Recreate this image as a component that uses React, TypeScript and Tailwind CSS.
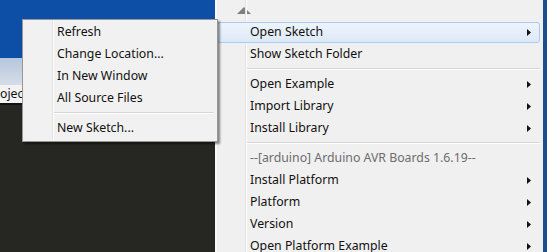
import React from "react";

const Arrow = () => (
  <svg width="4" height="7" viewBox="0 0 4 7" className="shrink-0">
    <path d="M0 0 L4 3.5 L0 7 Z" fill="#111" />
  </svg>
);

type Item = { label: string; sub?: boolean; hl?: boolean; muted?: boolean } | "sep";

const rightItems: Item[] = [
  { label: "Open Sketch", sub: true, hl: true },
  { label: "Show Sketch Folder" },
  "sep",
  { label: "Open Example", sub: true },
  { label: "Import Library", sub: true },
  { label: "Install Library", sub: true },
  "sep",
  { label: "--[arduino] Arduino AVR Boards 1.6.19--", muted: true },
  { label: "Install Platform", sub: true },
  { label: "Platform", sub: true },
  { label: "Version", sub: true },
  { label: "Open Platform Example", sub: true },
];

const popupItems: Item[] = [
  { label: "Refresh" },
  { label: "Change Location..." },
  { label: "In New Window" },
  { label: "All Source Files" },
  "sep",
  { label: "New Sketch..." },
];

export default function App() {
  return (
    <div
      className="relative w-[547px] h-[252px] overflow-hidden flex text-[12.3px] text-[#111]"
      style={{ fontFamily: '"Noto Sans", "Liberation Sans", sans-serif' }}
    >
      {/* left background */}
      <div className="w-[215px] h-full flex flex-col shrink-0">
        <div className="h-[58px] shrink-0 bg-[#0d4fa6]" />
        <div className="h-[27px] shrink-0 bg-gradient-to-b from-[#b5c6dc] to-[#d6dde7]" />
        <div className="h-[18px] shrink-0 bg-[#f3f3f3] flex items-center leading-none text-[#111]">
          <span>oject</span>
        </div>
        <div className="h-[2px] shrink-0 bg-[#111]" />
        <div className="flex-1 bg-[#262622]" />
      </div>

      {/* right menu */}
      <div className="flex-1 h-full flex">
        <div className="w-[2px] bg-[#f9f9f9]" />
        <div className="relative flex-1 bg-[#f0f0f0] flex flex-col">
          <div className="absolute left-[28px] top-0 bottom-0 w-[1px] bg-[#e2e3e3]" />
          <div className="absolute left-[29px] top-0 bottom-0 w-[1px] bg-[#fdfdfd]" />
          <div className="h-[21px] shrink-0 flex items-center pl-[20px]">
            <svg width="14" height="7" viewBox="0 0 14 7" className="block shrink-0 w-[14px] h-[7px]">
              <path d="M0 7 L7 0 L14 7 Z" fill="#7e7e7e" />
            </svg>
          </div>
          {rightItems.map((it, i) =>
            it === "sep" ? (
              <div key={i} className="h-[8px] shrink-0 flex flex-col justify-center pl-[30px] pr-[3px]">
                <div className="h-[1px] bg-[#d7d7d7]" />
                <div className="h-[1px] bg-[#ffffff]" />
              </div>
            ) : (
              <div key={i} className="relative h-[22px] shrink-0 flex items-center">
                {it.hl && (
                  <div className="absolute left-0 right-[3px] top-[1px] bottom-0 rounded-[3px] border border-[#a8c9f0] bg-gradient-to-b from-[#eef4fc] to-[#dde9f8]" />
                )}
                <span
                  className={
                    "relative pl-[33px] flex-1 whitespace-nowrap " +
                    (it.muted ? "text-[#6d6d6d]" : "")
                  }
                >
                  {it.label}
                </span>
                {it.sub && (
                  <span className="relative pr-[12px] flex items-center">
                    <Arrow />
                  </span>
                )}
              </div>
            )
          )}
        </div>
        <div className="w-[4px] bg-[#1a4f8f]" />
      </div>

      {/* popup */}
      <div className="absolute left-[22px] top-[19px] w-[196px] h-[123px] bg-[#f1f1f1] border border-[#979797] shadow-[2px_2px_2px_rgba(0,0,0,0.45)]">
        <div className="absolute left-[29px] top-0 bottom-0 w-[1px] bg-[#e2e3e3]" />
        <div className="absolute left-[30px] top-0 bottom-0 w-[1px] bg-[#fdfdfd]" />
        <div className="relative pt-[1px] flex flex-col">
          {popupItems.map((it, i) =>
            it === "sep" ? (
              <div key={i} className="h-[8px] shrink-0 flex flex-col justify-center pl-[31px] pr-[3px]">
                <div className="h-[1px] bg-[#d7d7d7]" />
                <div className="h-[1px] bg-[#ffffff]" />
              </div>
            ) : (
              <div key={i} className="h-[22px] shrink-0 flex items-center pl-[34px] whitespace-nowrap">
                {it.label}
              </div>
            )
          )}
        </div>
      </div>
    </div>
  );
}
